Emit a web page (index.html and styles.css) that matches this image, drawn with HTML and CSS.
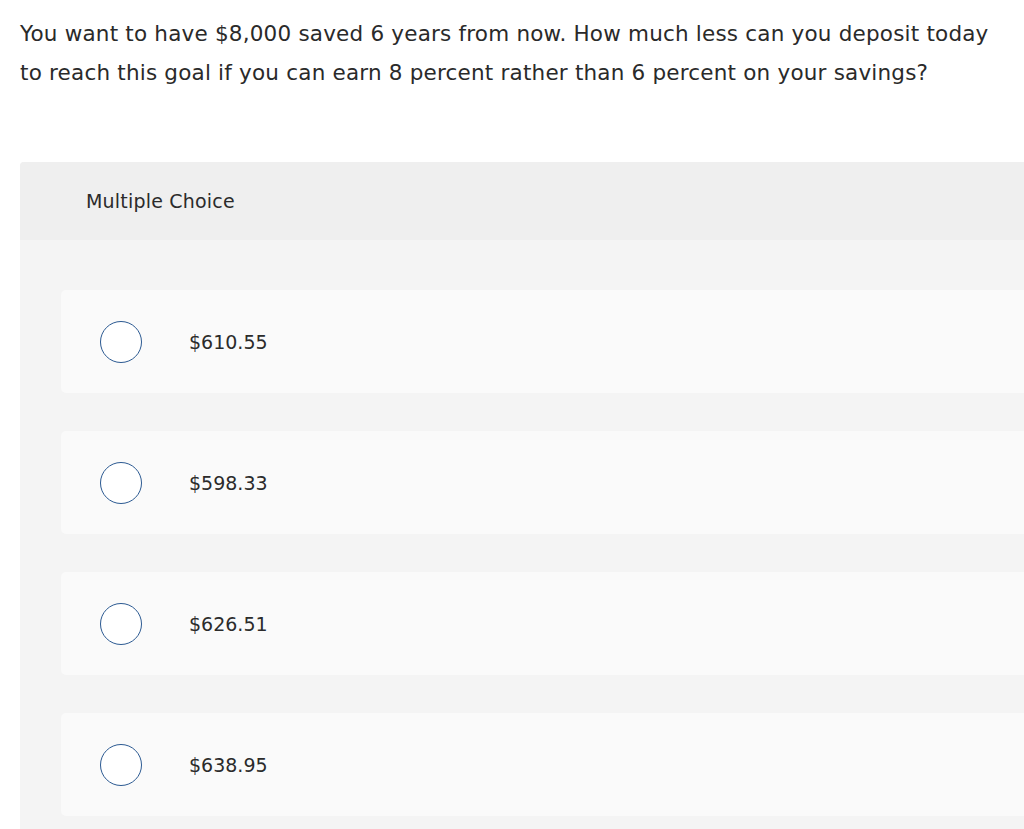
FILE: index.html
```html
<!DOCTYPE html>
<html lang="en">
<head>
<meta charset="utf-8">
<title>Multiple Choice</title>
<link rel="stylesheet" href="styles.css">
</head>
<body>
<p class="question">You want to have $8,000 saved 6 years from now. How much less can you deposit today to reach this goal if you can earn 8 percent rather than 6 percent on your savings?</p>
<section class="mc">
  <div class="mc-head">Multiple Choice</div>
  <div class="mc-body">
    <label class="choice"><span class="radio"></span><span class="amount">$610.55</span></label>
    <label class="choice"><span class="radio"></span><span class="amount">$598.33</span></label>
    <label class="choice"><span class="radio"></span><span class="amount">$626.51</span></label>
    <label class="choice"><span class="radio"></span><span class="amount">$638.95</span></label>
  </div>
</section>
</body>
</html>
```
FILE: styles.css
```css
html, body {
  margin: 0;
  padding: 0;
  background: #ffffff;
  overflow: hidden;
}
body {
  font-family: "DejaVu Sans", "Liberation Sans", sans-serif;
  color: #2b2b2b;
}
.question {
  margin: 0;
  padding: 14px 20px 0 20px;
  font-size: 21.5px;
  letter-spacing: 0.2px;
  line-height: 39px;
  color: #2a2a2a;
}
.mc {
  margin: 70px 0 0 20px;
  border-radius: 4px 0 0 0;
  overflow: hidden;
  background: #f4f4f4;
}
.mc-head {
  height: 78px;
  display: flex;
  align-items: center;
  padding-left: 66px;
  background: #efefef;
  font-size: 19px;
  letter-spacing: 0.2px;
  color: #2b2b2b;
}
.mc-body {
  padding: 50px 0 20px 41px;
  display: flex;
  flex-direction: column;
  gap: 38px;
}
.choice {
  height: 103px;
  display: flex;
  align-items: center;
  padding-left: 39px;
  background: #fafafa;
  border-radius: 5px 0 0 5px;
}
.radio {
  width: 40px;
  height: 40px;
  border: 1.6px solid #2c5a92;
  border-radius: 50%;
  background: #ffffff;
  flex: none;
}
.amount {
  margin-left: 47px;
  font-size: 19px;
  color: #2b2b2b;
}
```
